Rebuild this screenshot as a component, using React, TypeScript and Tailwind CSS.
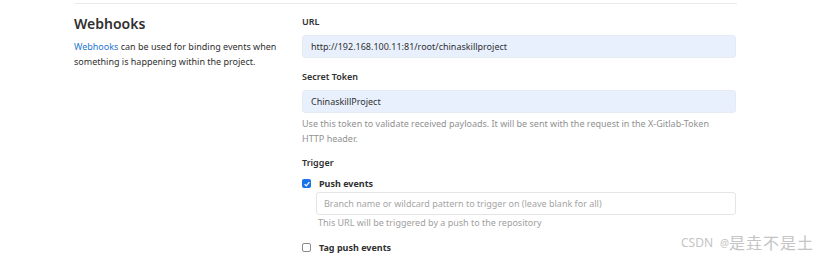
export default function App() {
  return (
    <div
      className="w-[830px] h-[258px] bg-white overflow-hidden relative text-[#303030]"
      style={{ fontFamily: '"Noto Sans", "Noto Sans CJK SC", sans-serif' }}
    >
      <div className="ml-[74px] mt-[3px] w-[663px] border-t border-[#eaeaea] flex">
        {/* left column */}
        <div className="w-[228px] shrink-0">
          <h4 className="mt-[10px] text-[14px] leading-[20px] font-semibold">Webhooks</h4>
          <p className="mt-[5px] w-[215px] text-[9px] leading-[15px]">
            <span className="text-[#1f78d1]">Webhooks</span> can be used for binding events when something is happening within the project.
          </p>
        </div>

        {/* right column */}
        <div className="w-[434px] text-[9px]">
          <label className="block mt-[10px] leading-[15px] font-semibold">URL</label>
          <div className="mt-[6px] h-[23px] rounded-[3px] border border-[#e6ebf3] bg-[#e8f0fe] px-[8px] flex items-center leading-[15px]">
            http://192.168.100.11:81/root/chinaskillproject
          </div>

          <label className="block mt-[11px] leading-[15px] font-semibold">Secret Token</label>
          <div className="mt-[6px] h-[23px] rounded-[3px] border border-[#e6ebf3] bg-[#e8f0fe] px-[8px] flex items-center leading-[15px]">
            ChinaskillProject
          </div>
          <p className="mt-[3px] pr-[10px] leading-[15px] text-[#919191]">
            Use this token to validate received payloads. It will be sent with the request in the X-Gitlab-Token HTTP header.
          </p>

          <label className="block mt-[9px] leading-[15px] font-semibold">Trigger</label>

          <div className="mt-[6px] flex items-center h-[15px]">
            <span className="w-[9px] h-[9px] rounded-[2px] bg-[#1a73e8] flex items-center justify-center">
              <svg viewBox="0 0 10 10" className="w-[8px] h-[8px]">
                <path d="M2 5.2 L4.1 7.3 L8 2.6" fill="none" stroke="white" strokeWidth="1.6" />
              </svg>
            </span>
            <span className="ml-[8px] font-bold">Push events</span>
          </div>
          <div className="ml-[14px]">
            <div className="mt-[1px] h-[23px] rounded-[3px] border border-[#e5e5e5] bg-white px-[7px] flex items-center text-[#a5a5a5] leading-[15px]">
              Branch name or wildcard pattern to trigger on (leave blank for all)
            </div>
            <p className="mt-[1px] ml-[2px] leading-[14px] text-[#a0a0a0]">This URL will be triggered by a push to the repository</p>
          </div>

          <div className="mt-[10px] flex items-center h-[15px]">
            <span className="w-[9px] h-[9px] rounded-[2px] border border-[#8a8a8a] bg-white" />
            <span className="ml-[8px] font-bold">Tag push events</span>
          </div>
        </div>
      </div>

      <div className="absolute left-[681px] top-[234px] flex items-center text-[#c4c4c4] leading-[18px]">
        <span className="text-[12px]">CSDN</span>
        <span className="ml-[7px] text-[10px]">@</span>
        <span className="text-[16px] tracking-[1px]">是垚不是土</span>
      </div>
    </div>
  );
}
